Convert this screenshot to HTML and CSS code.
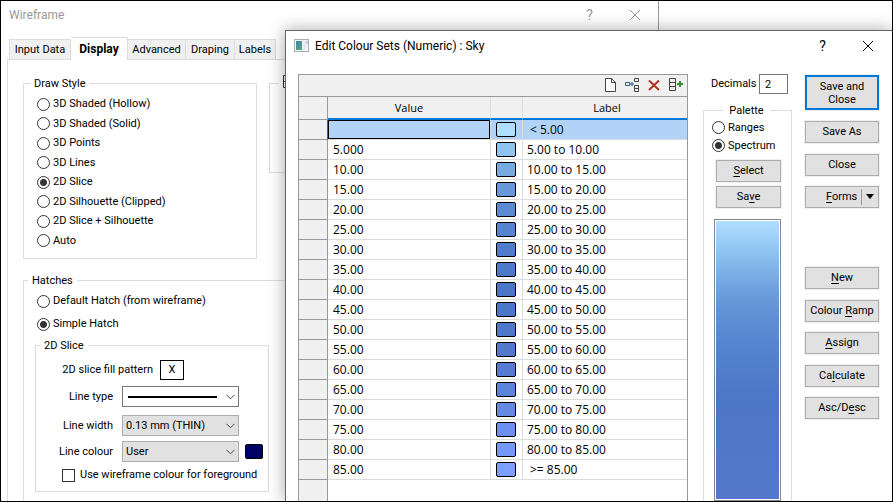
FILE: index.html
```html
<!DOCTYPE html>
<html lang="en">
<head>
<meta charset="utf-8">
<title>Edit Colour Sets</title>
<link rel="stylesheet" href="styles.css">
</head>
<body>
<div class="desktop">
  <section class="window">
    <header class="titlebar">
      <h1>Wireframe</h1>
      <button class="sys help" type="button">?</button>
      <button class="sys" type="button" aria-label="Close window"><svg width="12" height="12" viewBox="0 0 12 12"><path d="M1 1l10 10M11 1L1 11"/></svg></button>
    </header>
    <nav class="tabs">
      <button class="tab" type="button">Input Data</button>
      <button class="tab active" type="button">Display</button>
      <button class="tab" type="button">Advanced</button>
      <button class="tab" type="button">Draping</button>
      <button class="tab" type="button">Labels</button>
    </nav>
    <div class="panel">
      <div class="top-groups">
        <fieldset class="draw">
          <legend>Draw Style</legend>
          <div class="options">
            <label><input type="radio" name="style">3D Shaded (Hollow)</label>
            <label><input type="radio" name="style">3D Shaded (Solid)</label>
            <label><input type="radio" name="style">3D Points</label>
            <label><input type="radio" name="style">3D Lines</label>
            <label><input type="radio" name="style" checked>2D Slice</label>
            <label><input type="radio" name="style">2D Silhouette (Clipped)</label>
            <label><input type="radio" name="style">2D Slice + Silhouette</label>
            <label><input type="radio" name="style">Auto</label>
          </div>
        </fieldset>
        <fieldset class="extra">
          <legend><button class="collapse" type="button" aria-label="Collapse group"><svg width="13" height="13" viewBox="0 0 13 13"><path d="M.5 .5h12v12H.5zM.5 6.500h12"/></svg></button></legend>
        </fieldset>
      </div>
      <fieldset class="hatches">
        <legend>Hatches</legend>
        <div class="hatch-options">
          <label><input type="radio" name="hatch">Default Hatch (from wireframe)</label>
          <label><input type="radio" name="hatch" checked>Simple Hatch</label>
        </div>
        <fieldset class="slice">
          <legend>2D Slice</legend>
          <div class="field pattern"><label for="fill">2D slice fill pattern</label><button id="fill" class="pattern-box" type="button">X</button></div>
          <div class="field"><label for="ltype">Line type</label>
            <span class="combo white"><select id="ltype"><option></option></select><i class="stroke"></i><svg width="9" height="6" viewBox="0 0 9 6"><path d="M.5 .8l4 4 4-4"/></svg></span></div>
          <div class="field"><label for="lwidth">Line width</label>
            <span class="combo"><select id="lwidth"><option>0.13 mm (THIN)</option></select><svg width="9" height="6" viewBox="0 0 9 6"><path d="M.5 .8l4 4 4-4"/></svg></span></div>
          <div class="field"><label for="lcolour">Line colour</label>
            <span class="combo"><select id="lcolour"><option>User</option></select><svg width="9" height="6" viewBox="0 0 9 6"><path d="M.5 .8l4 4 4-4"/></svg></span><i class="swatch navy"></i></div>
          <label class="check"><input type="checkbox">Use wireframe colour for foreground</label>
        </fieldset>
      </fieldset>
    </div>
  </section>

  <section class="dialog">
    <header class="titlebar">
      <svg class="app" width="15" height="13" viewBox="0 0 15 13"><defs><linearGradient id="ag" x2="1" y2="1"><stop offset="0" stop-color="#4a7fb0"/><stop offset="1" stop-color="#4fae78"/></linearGradient></defs><rect x=".5" y=".5" width="14" height="12" fill="#f4f6f8" stroke="#a9b0b5"/><rect x="2" y="2" width="6" height="9" fill="url(#ag)"/><path d="M9 2h3v9H9z" fill="#e3e9ee"/><path d="M13 2v3" stroke="#7fa6c6"/></svg>
      <h2>Edit Colour Sets (Numeric) : Sky</h2>
      <button class="sys help" type="button">?</button>
      <button class="sys" type="button" aria-label="Close dialog"><svg width="12" height="12" viewBox="0 0 12 12"><path d="M1 1l10 10M11 1L1 11"/></svg></button>
    </header>
    <div class="body">
      <div class="sheet">
        <div class="toolbar">
          <button type="button" aria-label="New row"><svg width="16" height="16" viewBox="0 0 16 16"><path d="M3.500 1.500h6l4 4v9h-10zM9.500 1.500v4h4" fill="#fff" stroke="#444"/></svg></button>
          <button type="button" aria-label="Insert rows"><svg width="16" height="16" viewBox="0 0 16 16" fill="none"><path d="M1.500 5.500h4v3h-4zM6 7h4M8 5v4" stroke="#1e5c9c"/><path d="M10.500 1.500h4v3h-4zM10.500 8.500h4v6h-4zM10.500 11.500h4" stroke="#444"/></svg></button>
          <button type="button" aria-label="Delete row"><svg width="16" height="16" viewBox="0 0 16 16" fill="none"><path d="M3 3.500l10 9.500M13 3.500L3 13" stroke="#b5321f" stroke-width="2"/></svg></button>
          <button type="button" aria-label="Add column"><svg width="16" height="16" viewBox="0 0 16 16" fill="none"><path d="M1.500 1.500h6v12h-6zM1.500 5.500h6M1.500 9.500h6" stroke="#444"/><path d="M9 7h6M12 4v6" stroke="#388a34" stroke-width="2"/></svg></button>
        </div>
        <table>
          <colgroup><col class="c-head"><col class="c-value"><col class="c-swatch"><col></colgroup>
          <thead><tr><th></th><th>Value</th><th></th><th>Label</th></tr></thead>
          <tbody id="rows"></tbody>
        </table>
        <div class="rest"></div>
      </div>
      <div class="side">
        <div class="decimals"><label for="dec">Decimals</label><input id="dec" type="text" value="2"></div>
        <fieldset class="palette">
          <legend>Palette</legend>
          <label><input type="radio" name="pal">Ranges</label>
          <label><input type="radio" name="pal" checked>Spectrum</label>
          <div class="palette-buttons">
            <button class="btn" type="button"><u>S</u>elect</button>
            <button class="btn" type="button">Sa<u>v</u>e</button>
          </div>
          <div class="ramp"></div>
        </fieldset>
      </div>
      <div class="actions">
        <button class="btn primary" type="button">Save and Close</button>
        <div class="group main">
          <button class="btn" type="button">Save As</button>
          <button class="btn" type="button">Close</button>
          <button class="btn split" type="button"><span><u>F</u>orms</span><i></i></button>
        </div>
        <div class="group tools">
          <button class="btn" type="button"><u>N</u>ew</button>
          <button class="btn" type="button">Colour <u>R</u>amp</button>
          <button class="btn" type="button"><u>A</u>ssign</button>
          <button class="btn" type="button">Ca<u>l</u>culate</button>
          <button class="btn" type="button">Asc/D<u>e</u>sc</button>
        </div>
      </div>
    </div>
  </section>
</div>
<script src="rows.js"></script>
</body>
</html>
```
FILE: rows.js
```js
const colours = ["#b0deff", "#8fc3f0", "#78aae2", "#6898da", "#5c8bd2", "#5684ce",
  "#507ccb", "#4d79c8", "#4c76c7", "#4c76c8", "#4f77ca", "#5378cc", "#577bd1",
  "#5d82d9", "#6588e1", "#6d90ec", "#7698f6", "#7d9fff"];
const last = colours.length - 1;
document.getElementById("rows").innerHTML = colours.map((colour, i) => {
  const from = (i * 5).toFixed(2);
  const to = (i * 5 + 5).toFixed(2);
  const value = i === 0 ? '<input type="text" aria-label="Value">' : i === 1 ? "5.000" : from;
  const label = i === 0 ? "< 5.00" : i === last ? ">= 85.00" : `${from} to ${to}`;
  const open = i === 0 || i === last ? ' class="open"' : "";
  return `<tr><td></td><td>${value}</td><td><i class="swatch" style="background:${colour}"></i></td><td${open}>${label.replace("<", "&lt;")}</td></tr>`;
}).join("");
```
FILE: styles.css
```css
* { box-sizing: border-box; }
body { margin: 0; font: 11px/16px Roboto, "Liberation Sans", sans-serif; color: #000; background: #fff; }
button, input, select { font: inherit; color: inherit; margin: 0; }
button { padding: 0; }
h1, h2 { margin: 0; font-size: 12px; font-weight: 400; flex: 1; }
fieldset { margin: 0; padding: 0; border: 1px solid #dcdcdc; min-width: 0; }
legend { padding: 0 4px; height: 16px; line-height: 18px; }
u { text-underline-offset: 2px; }

.desktop { position: relative; height: 100vh; overflow: hidden; border: 1px solid #000; display: flex; background: #fff; }
.window { width: 74%; max-width: 658px; border-right: 1px solid #999; display: flex; flex-direction: column; }
.titlebar { display: flex; align-items: center; }
.window .titlebar { height: 28px; padding-left: 8px; padding-right: 1px; color: #999; }
.sys { width: 45px; height: 28px; border: 0; background: none; font-size: 14px; }
.sys svg { display: block; margin: auto; fill: none; stroke: currentColor; }

.tabs { display: grid; grid-template-columns: 62px 57px 58px 49px 41px; align-items: end; padding-left: 8px; margin-top: 8px; }
.tab { height: 20px; border: 1px solid #dcdcdc; border-width: 1px 1px 0 0; background: #f0f0f0; }
.tab:first-child { border-left-width: 1px; }
.tab.active { height: 23px; margin-bottom: -1px; background: #fff; font-size: 12px; font-weight: 700; position: relative; }
.panel { flex: 1; margin-left: 6px; border: 1px solid #dcdcdc; border-width: 1px 0 0 1px; padding: 15px 0 0 15px; display: flex; flex-direction: column; min-height: 0; }
.top-groups { display: flex; gap: 12px; align-items: flex-start; }
.draw { width: 234px; }
.draw legend { margin-left: -7px; }
.draw, .hatches { padding-left: 13px; }
.options { display: flex; flex-direction: column; justify-content: space-between; min-height: 153px; margin: 5px 0 9px; }
label { display: flex; align-items: center; gap: 3px; white-space: nowrap; }
.extra { flex: 1; height: 98px; }
.extra legend { margin-left: 9px; }
.collapse { display: block; border: 0; background: none; }
.collapse svg { display: block; fill: none; stroke: #333; }

input[type=radio], input[type=checkbox] { appearance: none; flex: none; width: 13px; height: 13px; border: 1px solid #333; background: #fff; }
input[type=radio] { border-radius: 50%; }
input[type=radio]:checked { background: radial-gradient(circle, #333 3px, #fff 4px); }

.hatches { flex: 1; margin-top: 13px; border-bottom: 0; border-right: 0; min-height: 0; }
.hatches legend { margin-left: -9px; }
.hatch-options { display: flex; flex-direction: column; gap: 7px; padding-top: 5px; }
.slice { width: 234px; margin: 5px 0 0 -2px; padding-bottom: 8px; display: flex; flex-direction: column; }
.slice legend, .hatches .slice legend { margin-left: 4px; }
.slice .field { display: grid; grid-template-columns: 77px 117px 18px; gap: 0 9px; align-items: center; margin-bottom: 5px; }
.slice .field label { justify-content: flex-end; }
.slice .pattern { grid-template-columns: 117px 24px; gap: 7px; margin: 7px 0 6px; }
.pattern-box { height: 20px; border: 1px solid #000; background: #fff; }
.combo { display: grid; align-items: center; height: 21px; }
.combo > * { grid-area: 1 / 1; }
.combo select { appearance: none; width: 100%; height: 21px; padding: 0 3px; border: 1px solid #adadad; border-radius: 0; background: #e1e1e1; }
.combo svg { justify-self: end; margin-right: 4px; fill: none; stroke: #444; }
.white select { background: #fff; border-color: #777; }
.slice .field:has(.white) { margin-bottom: 8px; }
.stroke { height: 2px; margin: 0 22px 0 6px; background: #000; }
.swatch { display: block; width: 20px; height: 15px; border: 1px solid #000; border-radius: 2px; }
.navy { width: 18px; background: #000066; margin-left: -3px; }
.check { gap: 5px; padding-left: 26px; }

.dialog { position: absolute; left: 284px; top: 29px; right: 0; bottom: 0; background: #fff; border: 1px solid #666; border-width: 1px 0 0 1px; box-shadow: 0 0 16px rgba(0,0,0,.35); display: flex; flex-direction: column; }
.dialog .titlebar { height: 43px; flex: none; padding: 0 2px 14px 8px; }
.app { margin-right: 6px; }
.body { flex: 1; min-height: 0; display: flex; padding-right: 13px; padding-left: 12px; }
.sheet { flex: 1; display: flex; flex-direction: column; border: 1px solid #999; border-bottom: 0; margin-right: 15px; min-width: 0; }
.toolbar { height: 22px; flex: none; background: #f0f0f0; border-bottom: 1px solid #999; display: flex; justify-content: flex-end; align-items: flex-start; padding-top: 2px; gap: 6px; padding-right: 3px; }
.toolbar button { border: 0; background: none; width: 16px; height: 16px; }
.toolbar svg { display: block; }
table { width: 100%; table-layout: fixed; border-collapse: separate; border-spacing: 0; font: 12px/19px "Open Sans", sans-serif; }
.c-head { width: 29px; }
.c-value { width: 163px; }
.c-swatch { width: 32px; }
th { height: 23px; padding: 0; background: #f0f0f0; font: 11px/20px "Open Sans", sans-serif; border-right: 1px solid #dcdcdc; border-bottom: 2px solid #0078d7; }
th:first-child { border-right-color: #999; border-bottom: 1px solid #999; }
td { height: 20px; padding: 0 0 0 5px; border-right: 1px solid #dcdcdc; border-bottom: 1px solid #dcdcdc; }
td:first-child { background: #f0f0f0; border-color: #999; }
td:last-child, th:last-child { border-right: 0; padding-left: 4px; }
td.open:last-child { padding-left: 7px; }
tbody tr:first-child { background: #b0d3f7; }
tbody tr:first-child td:nth-child(2) { padding: 0; }
td input { display: block; width: 100%; height: 19px; border: 1px solid #000; background: none; }
tbody tr:first-child td:first-child { border-right-color: #0078d7; }
.rest { flex: 1; width: 29px; background: #f0f0f0; border-right: 1px solid #999; }

.side { width: 89px; flex: none; display: flex; flex-direction: column; }
.decimals { display: flex; justify-content: space-between; padding: 0 4px 0 8px; margin-bottom: 8px; }
.decimals input { width: 29px; height: 20px; padding: 0 5px; border: 1px solid #777; }
.palette { flex: 1; border-bottom: 0; padding: 1px 10px 0 8px; min-height: 0; display: flex; flex-direction: column; }
.palette legend { margin: 0 auto; padding: 0 6px; }
.palette label { height: 19px; }
.btn { height: 22px; border: 1px solid #adadad; background: #e1e1e1; outline: 1px solid #f0f0f0; }
.palette-buttons { display: grid; gap: 4px; margin: 5px 0 0 4px; width: 65px; }
.ramp { height: 300px; width: 67px; margin: 11px 0 0 2px; border: 1px solid #828790; padding: 1px; background: linear-gradient(#b0deff, #8fc3f0 11%, #6898da 28%, #5684ce 44%, #4c76c7 64%, #5378cc) content-box; }
.actions { width: 74px; flex: none; margin-left: 13px; display: flex; flex-direction: column; }
.group { display: flex; flex-direction: column; justify-content: space-between; }
.main { min-height: 87px; margin-top: 11px; }
.tools { min-height: 152px; margin-top: 59px; }
.primary { height: 35px; border: 2px solid #0078d7; line-height: 13px; padding: 0 8px; margin-top: 1px; }
.split { display: flex; align-items: center; padding-left: 20px; }
.split i { margin-left: auto; height: 16px; border-left: 1px solid #999; padding: 5px 4px; }
.split i::before { content: ""; display: block; border: 4px solid transparent; border-top: 5px solid #000; border-bottom: 0; }
```
